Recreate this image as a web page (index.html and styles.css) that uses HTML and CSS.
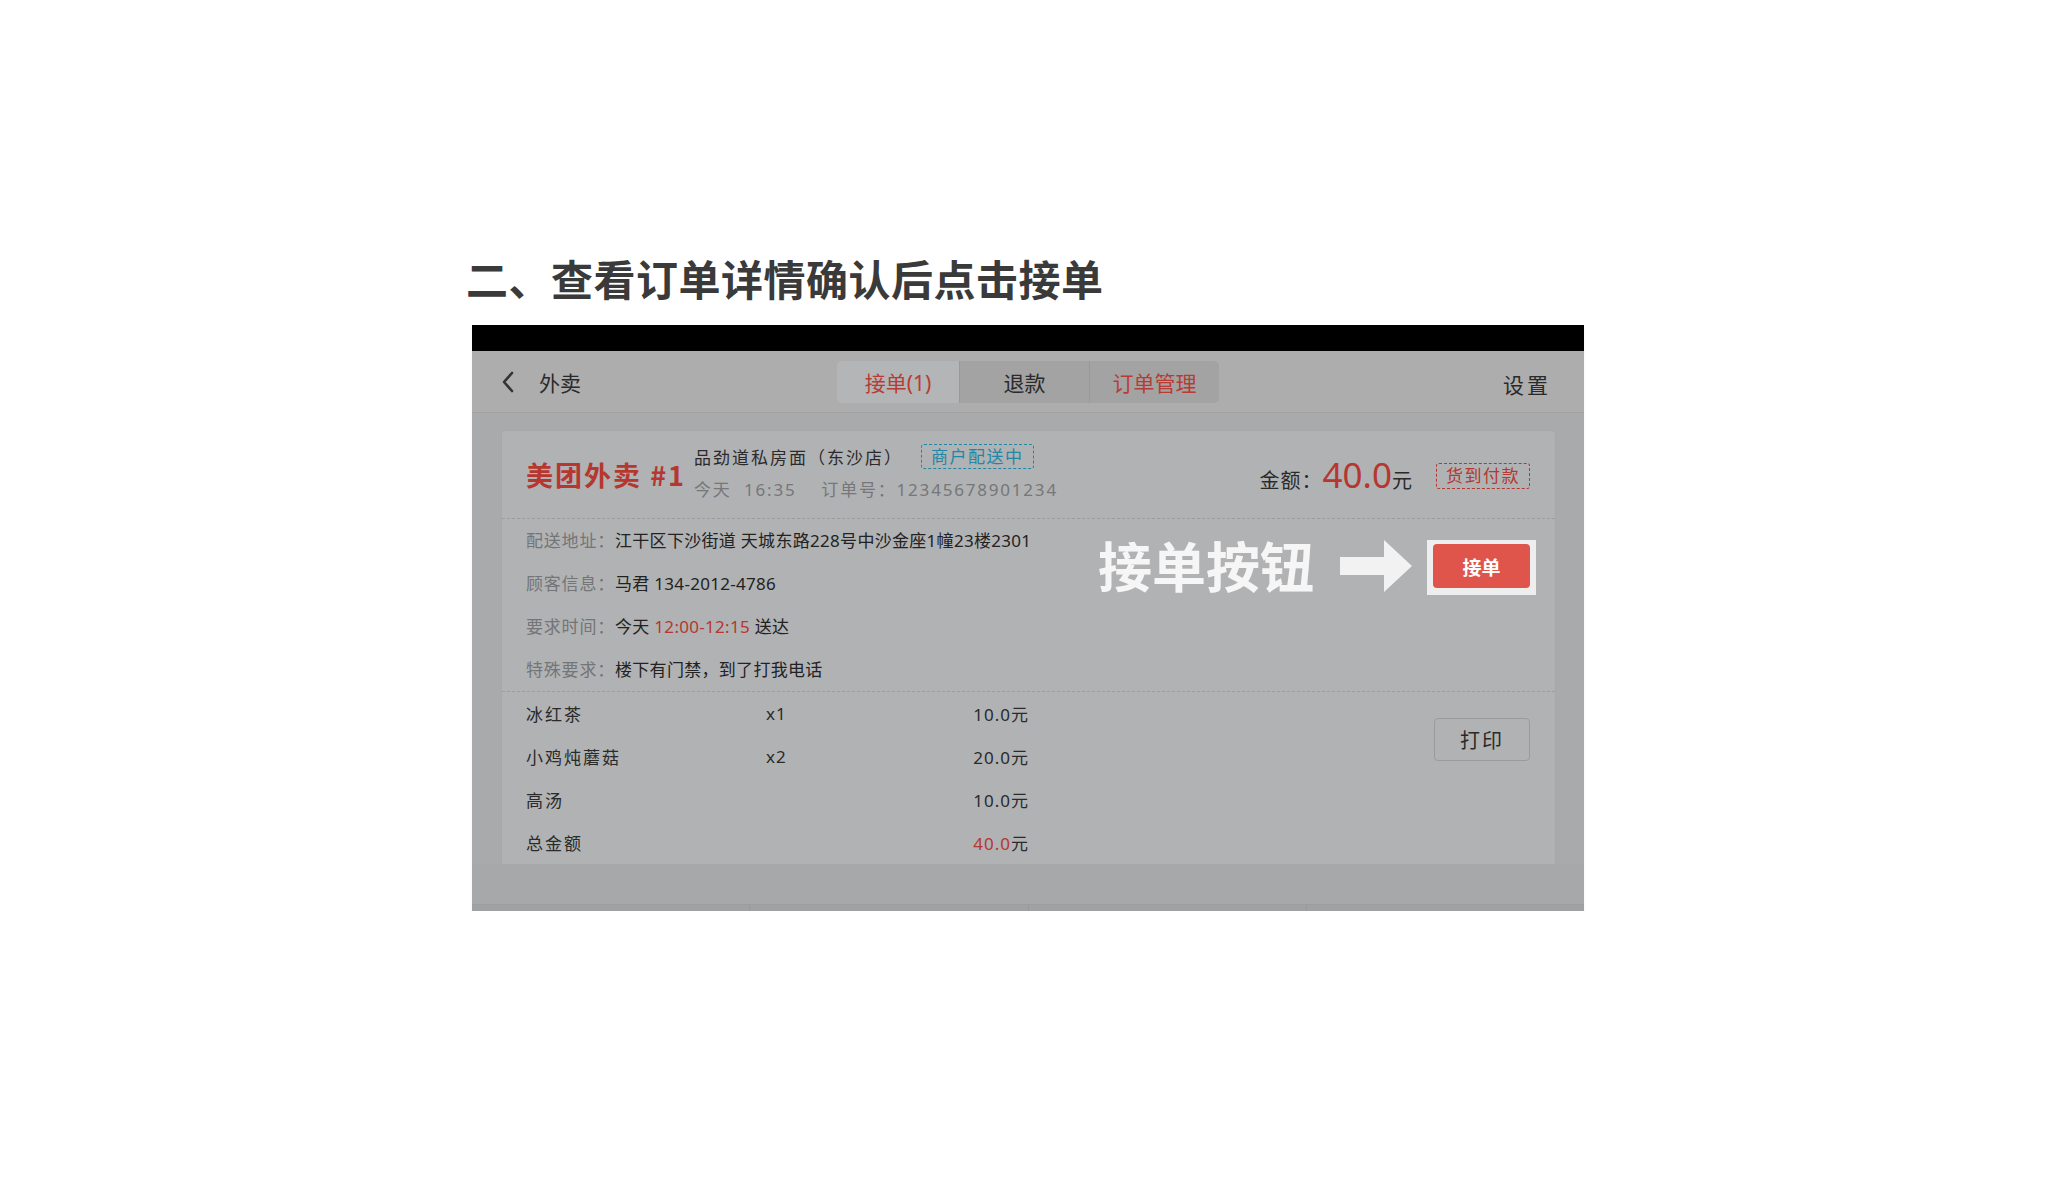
FILE: index.html
```html
<!DOCTYPE html>
<html lang="zh-CN">
<head>
  <meta charset="UTF-8">
  <title>查看订单详情</title>
  <link rel="stylesheet" href="styles.css">
</head>
<body>
  <div class="page">
    <h1>二、查看订单详情确认后点击接单</h1>

    <div class="device">
      <div class="statusbar"></div>

      <div class="topbar">
        <div class="back">
          <svg width="14" height="22" viewBox="0 0 14 22"><path d="M11 2 L3 11 L11 20" fill="none" stroke="#333" stroke-width="2.6" stroke-linecap="round" stroke-linejoin="round"/></svg>
          <span>外卖</span>
        </div>
        <div class="tabs">
          <div class="tab tab-active">接单(1)</div>
          <div class="tab tab-dark">退款</div>
          <div class="tab tab-dark tab-red">订单管理</div>
        </div>
        <div class="settings">设置</div>
      </div>

      <div class="content">
        <div class="card">
          <div class="card-head">
            <div class="brand">美团外卖 #1</div>
            <div class="store">
              <div class="store-line">
                <span class="store-name">品劲道私房面（东沙店）</span>
                <span class="badge badge-blue">商户配送中</span>
              </div>
              <div class="store-meta">今天&nbsp;&nbsp;16:35&nbsp;&nbsp;&nbsp;&nbsp;订单号：12345678901234</div>
            </div>
            <div class="amount">
              <span class="amount-label">金额：</span><span class="amount-num">40.0</span><span class="amount-unit">元</span>
            </div>
            <span class="badge badge-red">货到付款</span>
          </div>

          <div class="details">
            <div class="info">
              <div class="info-row"><span class="info-label">配送地址：</span>江干区下沙街道 天城东路228号中沙金座1幢23楼2301</div>
              <div class="info-row"><span class="info-label">顾客信息：</span>马君 134-2012-4786</div>
              <div class="info-row"><span class="info-label">要求时间：</span>今天 <span class="red">12:00-12:15</span> 送达</div>
              <div class="info-row"><span class="info-label">特殊要求：</span>楼下有门禁，到了打我电话</div>
            </div>
            <div class="callout">
              <div class="callout-text">接单按钮</div>
              <svg class="arrow" width="72" height="52" viewBox="0 0 72 52"><path d="M0 17 H44 V0 L72 26 L44 52 V35 H0 Z" fill="#f2f2f2"/></svg>
              <div class="highlight">
                <button class="btn-accept">接单</button>
              </div>
            </div>
          </div>

          <div class="items">
            <div class="item-list">
              <div class="item-row"><span class="item-name">冰红茶</span><span class="item-qty">x1</span><span class="item-price">10.0元</span></div>
              <div class="item-row"><span class="item-name">小鸡炖蘑菇</span><span class="item-qty">x2</span><span class="item-price">20.0元</span></div>
              <div class="item-row"><span class="item-name">高汤</span><span class="item-qty"></span><span class="item-price">10.0元</span></div>
              <div class="item-row"><span class="item-name">总金额</span><span class="item-qty"></span><span class="item-price"><span class="red">40.0</span>元</span></div>
            </div>
            <button class="btn-print">打印</button>
          </div>
        </div>
      </div>

      <div class="bottombar">
        <div class="bottom-tabs">
          <span></span><span></span><span></span><span></span>
        </div>
      </div>
    </div>
  </div>
</body>
</html>
```

FILE: styles.css
```css
body {
  margin: 0;
  background: #ffffff;
  font-family: "Noto Sans", "Noto Sans CJK SC", sans-serif;
  color: #333;
}
.page {
  width: 1120px;
  margin-left: 466px;
  padding-top: 248px;
}
h1 {
  margin: 0;
  font-family: "Noto Sans CJK SC", sans-serif;
  font-size: 42px;
  font-weight: bold;
  line-height: 60px;
  color: #3a3a3a;
  letter-spacing: 0.5px;
}
.device {
  width: 1112px;
  margin: 17px 0 0 6px;
  background: #a9aaac;
  box-shadow: 0 3px 3px rgba(0,0,0,0.06);
}
.statusbar {
  height: 26px;
  background: #000;
}
.topbar {
  height: 61px;
  background: #adadad;
  border-bottom: 1px solid #a2a2a2;
  display: flex;
  align-items: center;
  justify-content: space-between;
  padding: 0 33px 0 33px;
}
.back {
  width: 335px;
  display: flex;
  align-items: center;
  gap: 24px;
  font-size: 21px;
  color: #2a2a2a;
}
.back svg {
  display: block;
  margin-left: -4px;
}
.tabs {
  display: flex;
  height: 42px;
  margin-top: 1px;
}
.tab {
  display: flex;
  align-items: center;
  justify-content: center;
  font-size: 21px;
  color: #2a2a2a;
}
.tab-active {
  width: 122px;
  background: #b4b5b6;
  color: #b73c35;
  border-radius: 5px 0 0 5px;
}
.tab-dark {
  width: 129px;
  background: #a3a3a3;
  border-left: 1px solid #999;
}
.tab-red {
  color: #b73c35;
  border-radius: 0 5px 5px 0;
}
.settings {
  width: 335px;
  text-align: right;
  font-size: 21px;
  color: #2a2a2a;
  letter-spacing: 3px;
  padding-top: 4px;
}
.content {
  padding: 17px 28px 0 29px;
}
.card {
  background: #b1b2b4;
  border: 1px solid #a6a7a9;
  border-bottom: none;
  border-radius: 4px 4px 0 0;
}
.card-head {
  height: 87px;
  display: flex;
  align-items: center;
  padding: 0 25px 0 24px;
  border-bottom: 1px dashed #9c9d9f;
}
.brand {
  font-family: "Noto Sans CJK SC", sans-serif;
  font-size: 27px;
  font-weight: bold;
  color: #b5372f;
  letter-spacing: 2px;
  width: 168px;
}
.store {
  flex: 1;
  display: flex;
  flex-direction: column;
  gap: 7px;
  margin-top: -4px;
}
.store-line {
  display: flex;
  align-items: center;
  gap: 18px;
}
.store-name {
  font-size: 17px;
  color: #2a2a2a;
  letter-spacing: 2px;
}
.store-meta {
  font-size: 17px;
  color: #767778;
  letter-spacing: 1.8px;
}
.badge {
  display: inline-block;
  font-size: 17px;
  line-height: 23px;
  padding: 0 9px;
  border-radius: 3px;
  letter-spacing: 1.5px;
}
.badge-blue {
  color: #2187a6;
  border: 1.5px dashed #2187a6;
}
.badge-red {
  color: #b5372f;
  border: 1.5px dashed #b5372f;
  line-height: 24px;
  padding: 0 9px;
  margin-left: 24px;
  margin-top: 2px;
}
.amount {
  display: flex;
  align-items: baseline;
}
.amount-label {
  font-size: 20px;
  color: #2a2a2a;
  letter-spacing: 1px;
}
.amount-num {
  font-size: 35px;
  color: #b5372f;
}
.amount-unit {
  font-size: 20px;
  color: #2a2a2a;
}
.details {
  display: flex;
  justify-content: space-between;
  padding: 0 19px 0 24px;
  border-bottom: 1px dashed #9c9d9f;
}
.info-row {
  height: 43px;
  line-height: 43px;
  font-size: 17px;
  color: #222;
  letter-spacing: 0.3px;
}
.info-label {
  color: #747577;
  letter-spacing: 0.8px;
}
.red {
  color: #b5372f;
}
.callout {
  display: flex;
  align-items: center;
  margin-top: 21px;
  align-self: flex-start;
}
.callout-text {
  font-family: "Noto Sans CJK SC", sans-serif;
  font-size: 54px;
  font-weight: bold;
  color: #f6f6f6;
  margin-right: 26px;
  line-height: 57px;
  margin-top: -6px;
}
.arrow {
  display: block;
  margin-right: 15px;
  margin-top: -4px;
}
.highlight {
  background: #eeeeee;
  padding: 4px 6px 7px 6px;
}
.btn-accept {
  display: block;
  width: 97px;
  height: 44px;
  border: none;
  border-radius: 4px;
  background: #e0554b;
  color: #fff;
  font-family: "Noto Sans CJK SC", sans-serif;
  font-size: 19px;
  font-weight: bold;
}
.items {
  display: flex;
  justify-content: space-between;
  padding: 0 25px 0 24px;
}
.item-list {
  width: 503px;
}
.item-row {
  height: 43px;
  display: flex;
  align-items: center;
  font-size: 17px;
  color: #2a2a2a;
}
.item-name {
  width: 240px;
  letter-spacing: 2px;
}
.item-qty {
  flex: 1;
  letter-spacing: 1px;
}
.item-price {
  letter-spacing: 1px;
}
.btn-print {
  margin-top: 26px;
  width: 96px;
  height: 43px;
  background: transparent;
  border: 1px solid #9a9b9d;
  border-radius: 4px;
  font-family: "Noto Sans", "Noto Sans CJK SC", sans-serif;
  font-size: 20px;
  color: #2a2a2a;
  letter-spacing: 2px;
}
.bottombar {
  height: 47px;
  background: #a7a8aa;
  display: flex;
  flex-direction: column;
  justify-content: flex-end;
}
.bottom-tabs {
  height: 6px;
  display: flex;
  background: #a0a1a3;
  border-top: 1px solid #9c9d9f;
}
.bottom-tabs span {
  flex: 1;
  border-left: 1px solid #98999b;
}
.bottom-tabs span:first-child {
  border-left: none;
}
```
